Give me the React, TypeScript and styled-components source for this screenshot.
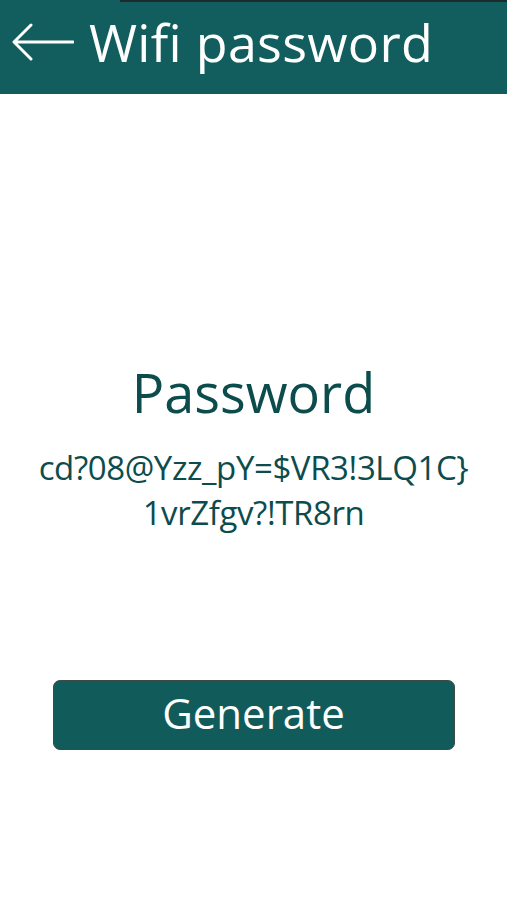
import React from "react";
import styled, { createGlobalStyle } from "styled-components";

const GlobalStyle = createGlobalStyle`
  html, body {
    margin: 0;
    padding: 0;
    background: #ffffff;
    font-family: "Open Sans", "Noto Sans", sans-serif;
  }
`;

const Screen = styled.div`
  width: 507px;
  height: 900px;
  display: flex;
  flex-direction: column;
  background: #ffffff;
`;

const StatusStrip = styled.div`
  height: 2px;
  display: flex;
  background: #125e5e;
  span {
    margin-left: 120px;
    flex: 1;
    background: #1c2a2c;
  }
`;

const Header = styled.header`
  height: 92px;
  background: #125e5e;
  display: flex;
  align-items: center;
  padding: 0 0 12px 12px;
  box-sizing: border-box;
  gap: 15px;
`;

const Title = styled.h1`
  margin: 0;
  color: #ffffff;
  font-size: 52px;
  font-weight: 400;
  letter-spacing: 0.3px;
  line-height: 1;
`;

const Body = styled.main`
  flex: 1;
  display: flex;
  flex-direction: column;
  align-items: center;
  padding-top: 258px;
`;

const Heading = styled.h2`
  margin: 0;
  color: #0d4c4c;
  font-size: 54px;
  font-weight: 400;
  line-height: 80px;
`;

const Secret = styled.p`
  margin: 13px 0 0;
  color: #0d4c4c;
  font-size: 33px;
  line-height: 45px;
  text-align: center;
  letter-spacing: -0.4px;
`;

const GenerateButton = styled.button`
  margin-top: 145px;
  width: 402px;
  height: 70px;
  background: #125b5b;
  border: 1px solid #3d4a4a;
  border-radius: 7px;
  color: #ffffff;
  font-family: inherit;
  font-size: 42px;
  line-height: 1;
  padding: 0 0 4px;
  cursor: pointer;
`;

const password = ["cd?08@Yzz_pY=$VR3!3LQ1C}", "1vrZfgv?!TR8rn"];

function BackArrow() {
  return (
    <svg width="62" height="38" viewBox="0 0 62 38" fill="none">
      <path
        d="M61 19H3M19 2L2 19l17 17"
        stroke="#ffffff"
        strokeWidth="3"
        strokeLinecap="round"
        strokeLinejoin="round"
      />
    </svg>
  );
}

export default function App() {
  return (
    <>
      <GlobalStyle />
      <Screen>
        <StatusStrip>
          <span />
        </StatusStrip>
        <Header>
          <BackArrow />
          <Title>Wifi password</Title>
        </Header>
        <Body>
          <Heading>Password</Heading>
          <Secret>
            {password[0]}
            <br />
            {password[1]}
          </Secret>
          <GenerateButton>Generate</GenerateButton>
        </Body>
      </Screen>
    </>
  );
}
